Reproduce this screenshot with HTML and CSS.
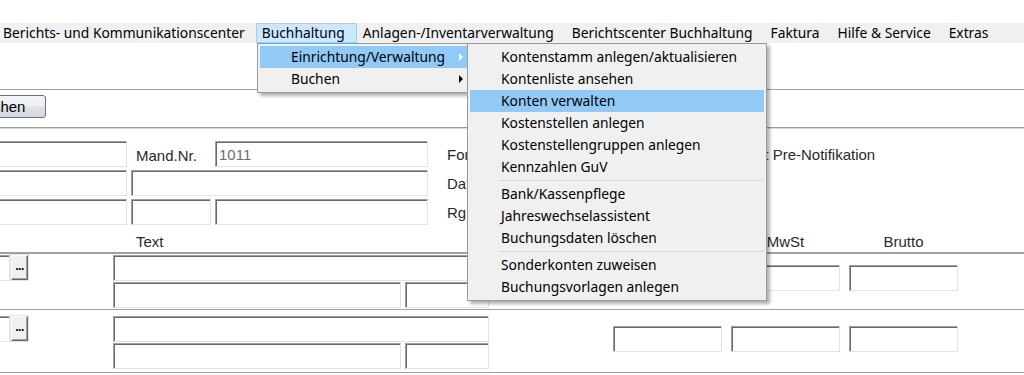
FILE: index.html
```html
<!DOCTYPE html>
<html lang="de">
<head>
<meta charset="utf-8">
<title>Buchhaltung</title>
<link rel="stylesheet" href="styles.css">
</head>
<body>
<div class="app">
  <div class="topgap"></div>
  <nav class="menubar">
    <span class="mi first">Berichts- und Kommunikationscenter</span>
    <span class="mi active">Buchhaltung</span>
    <span class="mi">Anlagen-/Inventarverwaltung</span>
    <span class="mi">Berichtscenter Buchhaltung</span>
    <span class="mi">Faktura</span>
    <span class="mi">Hilfe &amp; Service</span>
    <span class="mi">Extras</span>
  </nav>
  <div class="toolarea"></div>
  <div class="line"></div>
  <div class="btnbar"><button class="btn">Suchen</button></div>
  <div class="line2"></div>

  <div class="head">
    <div class="hgrid">
      <div class="f"></div>
      <div class="lbl">Mand.Nr.</div>
      <div class="f"><span class="val">1011</span></div>
      <div class="f"></div>
      <div class="f span2"></div>
      <div class="f"></div>
      <div class="f"></div>
      <div class="f"></div>
    </div>
    <div class="side">
      <div class="slbl">Formulardruck für SEPA-Lastschriftmandate, mit Pre-Notifikation</div>
      <div class="slbl">Datum</div>
      <div class="slbl">Rg Nr.</div>
    </div>
  </div>

  <div class="colhead">
    <div class="ch-l"></div>
    <div class="ch-t">Text</div>
    <div class="ch-n">
      <span class="chn">Netto</span>
      <span class="chn">MwSt</span>
      <span class="chn">Brutto</span>
    </div>
  </div>
  <div class="line3"></div>

  <div class="sect s1">
    <div class="lcol"><div class="f lf"></div><button class="dots">...</button></div>
    <div class="tcol">
      <div class="f big"></div>
      <div class="trow"><div class="f t1"></div><div class="f t2"></div></div>
    </div>
    <div class="ncol"><div class="f n"></div><div class="f n"></div><div class="f n"></div></div>
  </div>
  <div class="line"></div>
  <div class="sect s2">
    <div class="lcol"><div class="f lf"></div><button class="dots">...</button></div>
    <div class="tcol">
      <div class="f big"></div>
      <div class="trow"><div class="f t1"></div><div class="f t2"></div></div>
    </div>
    <div class="ncol"><div class="f n"></div><div class="f n"></div><div class="f n"></div></div>
  </div>
  <div class="line"></div>

  <div class="dd dd1">
    <div class="it hl">Einrichtung/Verwaltung<span class="arr white"></span></div>
    <div class="it">Buchen<span class="arr"></span></div>
  </div>
  <div class="dd dd2">
    <div class="it">Kontenstamm anlegen/aktualisieren</div>
    <div class="it">Kontenliste ansehen</div>
    <div class="it hl">Konten verwalten</div>
    <div class="it">Kostenstellen anlegen</div>
    <div class="it">Kostenstellengruppen anlegen</div>
    <div class="it">Kennzahlen GuV</div>
    <div class="sep"></div>
    <div class="it">Bank/Kassenpflege</div>
    <div class="it">Jahreswechselassistent</div>
    <div class="it">Buchungsdaten löschen</div>
    <div class="sep"></div>
    <div class="it">Sonderkonten zuweisen</div>
    <div class="it">Buchungsvorlagen anlegen</div>
  </div>
</div>
</body>
</html>
```
FILE: styles.css
```css
html, body {
  margin: 0;
  padding: 0;
}
body {
  width: 1024px;
  height: 375px;
  overflow: hidden;
  background: #fff;
  font-family: "Liberation Sans", Arial, sans-serif;
  font-size: 15px;
  color: #2a2a2a;
}
.app {
  position: relative;
  width: 1024px;
  height: 375px;
  overflow: hidden;
}
.topgap { height: 23px; }

.menubar {
  height: 20px;
  background: #f0f0f0;
  display: flex;
  font-family: "Noto Sans", sans-serif;
  font-size: 13.8px;
  color: #000;
}
.mi {
  box-sizing: border-box;
  height: 20px;
  line-height: 18px;
  padding: 0 11px 0 5px;
  border: 1px solid transparent;
  white-space: nowrap;
}
.mi.first { margin-left: -3px; padding-right: 10px; }
.mi.active {
  background: #cce8ff;
  border-color: #99d1ff;
}

.toolarea { height: 46px; }
.line { height: 1px; background: #a0a0a0; }
.line2 { height: 1px; background: #9a9a9a; border-bottom: 1px solid #dcdcdc; }
.line3 { height: 2px; background: #a0a0a0; }

.btnbar {
  height: 37px;
  box-sizing: border-box;
  padding-top: 5px;
}
.btn {
  display: block;
  margin: 0 0 0 -46px;
  width: 92px;
  height: 23px;
  padding: 0;
  border: 1px solid #707070;
  border-radius: 3px;
  background: linear-gradient(to bottom, #f4f5f7 0%, #eceef1 48%, #dde2e7 52%, #d2d9e0 100%);
  font-family: "Liberation Sans", Arial, sans-serif;
  font-size: 15px;
  color: #000;
}

.f {
  box-sizing: border-box;
  height: 26px;
  background: #fff;
  border-top: 1px solid #a0a0a0;
  border-left: 1px solid #a0a0a0;
  border-right: 1px solid #e3e3e3;
  border-bottom: 1px solid #e3e3e3;
  box-shadow: inset 1px 1px 0 #696969;
}
.val {
  display: block;
  padding: 4px 0 0 3px;
  color: #6d6d6d;
  line-height: 17px;
}

.head {
  display: flex;
  margin-left: -60px;
  padding-top: 12px;
}
.hgrid {
  display: grid;
  grid-template-columns: 187px 80px 213px;
  grid-auto-rows: 26px;
  gap: 3px 4px;
}
.span2 { grid-column: span 2; }
.lbl {
  padding: 6px 0 0 5px;
  line-height: 17px;
}
.side {
  margin-left: 19px;
  display: grid;
  grid-auto-rows: 26px;
  row-gap: 3px;
}
.slbl {
  line-height: 17px;
  padding-top: 5px;
  white-space: nowrap;
}

.colhead {
  display: flex;
  margin-left: -60px;
  height: 27px;
  box-sizing: border-box;
  padding-top: 8px;
  line-height: 17px;
}
.ch-l { width: 173px; }
.ch-t { width: 376px; padding-left: 23px; box-sizing: border-box; }
.ch-n { display: flex; gap: 9px; margin-left: 124px; }
.chn { width: 109px; text-align: center; }

.sect {
  display: flex;
  align-items: flex-start;
  margin-left: -60px;
  box-sizing: border-box;
}
.s1 { height: 55px; padding-top: 1px; }
.s2 { height: 62px; padding-top: 6px; }
.lcol { display: flex; gap: 1px; }
.lf { width: 70px; }
.dots {
  box-sizing: border-box;
  width: 17px;
  height: 25px;
  margin: 0;
  padding: 0 0 3px;
  background: #f0f0f0;
  border-top: 1px solid #fff;
  border-left: 1px solid #fff;
  border-right: 1px solid #696969;
  border-bottom: 1px solid #696969;
  box-shadow: inset -1px -1px 0 #a0a0a0, 0 0 0 1px #e3e3e3;
  font-family: "Liberation Sans", Arial, sans-serif;
  font-weight: bold;
  font-size: 12px;
  line-height: 12px;
  letter-spacing: -0.5px;
  color: #000;
}
.tcol {
  margin-left: 85px;
  width: 376px;
  display: flex;
  flex-direction: column;
  gap: 1px;
}
.trow { display: flex; gap: 4px; }
.t1 { width: 288px; }
.t2 { width: 84px; }
.ncol {
  display: flex;
  gap: 9px;
  margin-left: 124px;
  margin-top: 10px;
}
.n { width: 109px; }

.dd {
  position: absolute;
  top: 43px;
  box-sizing: border-box;
  background: #f0f0f0;
  border: 1px solid #999;
  box-shadow: 3px 3px 3px rgba(0, 0, 0, 0.3);
  padding: 2px;
  font-family: "Noto Sans", sans-serif;
  font-size: 13.8px;
  color: #000;
}
.dd1 { left: 257px; width: 213px; }
.dd2 { left: 467px; width: 300px; }
.it {
  position: relative;
  height: 22px;
  line-height: 22px;
  padding-left: 31px;
  white-space: nowrap;
}
.it.hl { background: #91c9f7; }
.sep {
  height: 1px;
  background: #d7d7d7;
  margin: 2px 0 2px 29px;
}
.arr {
  position: absolute;
  right: 4px;
  top: 7px;
  width: 0;
  height: 0;
  border-left: 4px solid #000;
  border-top: 4px solid transparent;
  border-bottom: 4px solid transparent;
}
.arr.white { border-left-color: #fff; }
```
